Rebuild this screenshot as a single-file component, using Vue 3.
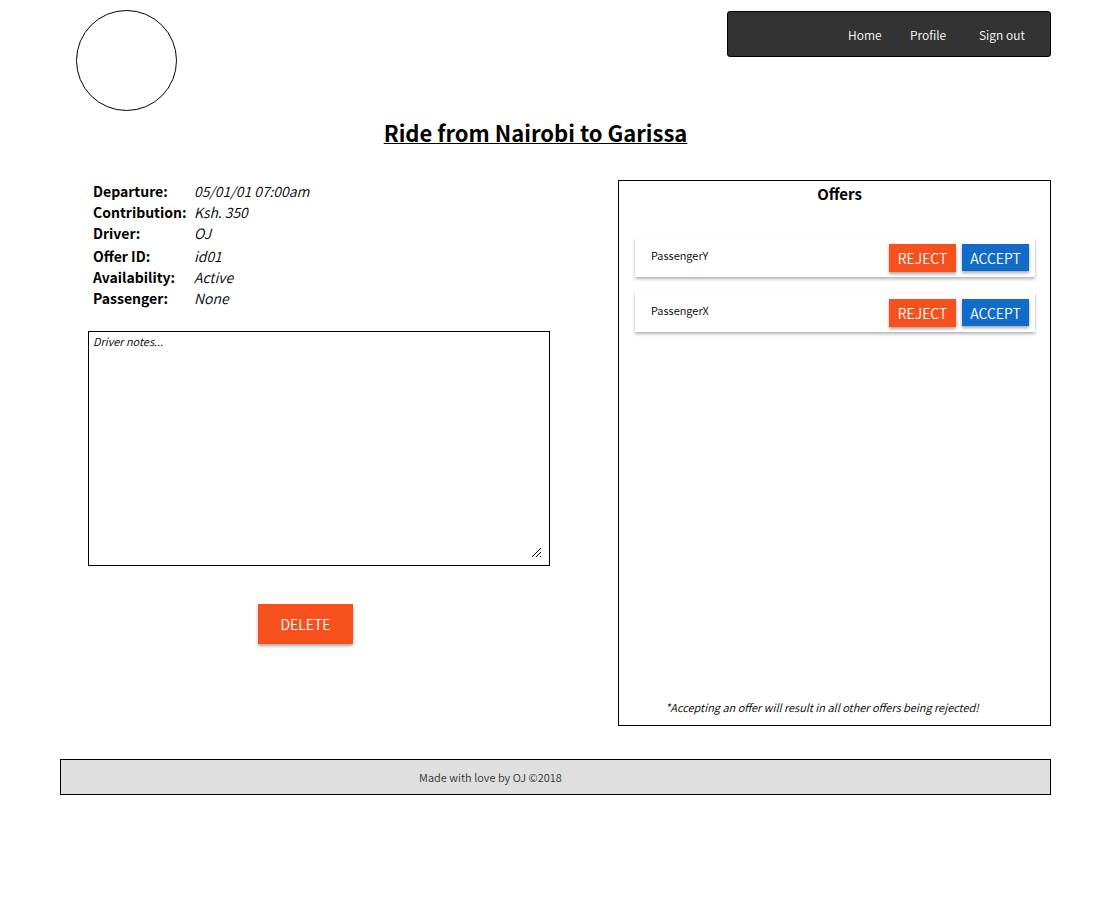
<script setup>
import { ref } from 'vue'

const details = [
  [
    { label: 'Departure:', value: '05/01/01 07:00am' },
    { label: 'Contribution:', value: 'Ksh. 350' },
    { label: 'Driver:', value: 'OJ' },
  ],
  [
    { label: 'Offer ID:', value: 'id01' },
    { label: 'Availability:', value: 'Active' },
    { label: 'Passenger:', value: 'None' },
  ],
]
const offers = ['PassengerY', 'PassengerX']
const notes = ref('')

// Pixels of the resize grip: one long diagonal, one short one and a corner dot.
const diagonal = (x, n) => Array.from({ length: n }, (_, i) => [x + i, 8 - i])
const gripPixels = [...diagonal(0, 9), ...diagonal(4, 5), ...diagonal(8, 1)]
</script>

<template>
  <div class="page">
    <header class="top">
      <div class="logo"></div>
      <nav class="nav">
        <a href="#home">Home</a>
        <a href="#profile">Profile</a>
        <a href="#signout">Sign out</a>
      </nav>
    </header>

    <h1 class="title"><span>Ride from Nairobi to Garissa</span></h1>

    <main class="main">
      <section class="ride">
        <div class="details">
          <dl v-for="(group, i) in details" :key="i" class="group">
            <template v-for="d in group" :key="d.label">
              <dt>{{ d.label }}</dt>
              <dd>{{ d.value }}</dd>
            </template>
          </dl>
        </div>
        <div class="notes">
          <textarea v-model="notes" aria-label="Driver notes" placeholder="Driver notes..."></textarea>
          <svg class="grip" width="9" height="9" viewBox="0 0 9 9" shape-rendering="crispEdges" aria-hidden="true">
            <rect v-for="([x, y], i) in gripPixels" :key="i" :x="x" :y="y" width="1" height="1" />
          </svg>
        </div>
        <button class="btn reject delete" type="button">DELETE</button>
      </section>

      <section class="offers">
        <h2>Offers</h2>
        <ul>
          <li v-for="name in offers" :key="name" class="offer">
            <span class="name">{{ name }}</span>
            <button class="btn reject" type="button">REJECT</button>
            <button class="btn accept" type="button">ACCEPT</button>
          </li>
        </ul>
        <p class="hint">*Accepting an offer will result in all other offers being rejected!</p>
      </section>
    </main>

    <footer class="footer">Made with love by OJ ©2018</footer>
  </div>
</template>

<style>
body {
  margin: 0;
  background: #fff;
}
</style>

<style scoped>
.page {
  box-sizing: border-box;
  padding: 10px 50px 0 60px;
  font-family: "Noto Sans CJK SC", "Noto Sans", sans-serif;
  color: #000;
}
.page * {
  box-sizing: border-box;
}
.top {
  display: flex;
  justify-content: space-between;
  align-items: flex-start;
  padding-left: 16px;
}
.logo {
  width: 101px;
  height: 101px;
  border: 1px solid #000;
  border-radius: 50%;
}
.nav {
  display: grid;
  grid-template-columns: 62px 69px 46px;
  justify-content: end;
  align-items: center;
  width: 324px;
  height: 46px;
  margin-top: 1px;
  padding: 2px 25px 0 0;
  background: #333;
  border: 1px solid #000;
  border-radius: 3px;
  font-size: 12px;
  line-height: 20px;
}
.nav a {
  color: #fff;
  font-weight: 350;
  text-decoration: none;
  white-space: nowrap;
}
.title {
  margin: 5px 0 0;
  padding-right: 40px;
  text-align: center;
  font-size: 22px;
  line-height: 32px;
}
.title span {
  text-decoration: underline;
  text-decoration-thickness: 1px;
  text-underline-offset: 1px;
}
.main {
  display: grid;
  grid-template-columns: 462fr 433fr;
  gap: 68px;
  margin-top: 32px;
  padding-left: 28px;
}
.ride {
  display: flex;
  flex-direction: column;
}
.details {
  display: flex;
  flex-direction: column;
  gap: 2px;
  padding: 1px 0 0 5px;
}
.group {
  display: grid;
  grid-template-columns: 101px 1fr;
  margin: 0;
  font-size: 14px;
  line-height: 21px;
}
.group dt {
  font-weight: 700;
  white-space: nowrap;
}
.group dd {
  margin: 0;
  font-style: italic;
  font-weight: 350;
}
.notes {
  position: relative;
  height: 235px;
  margin-top: 22px;
}
.notes textarea {
  display: block;
  width: 100%;
  height: 100%;
  margin: 0;
  padding: 1px 4px;
  border: 1px solid #000;
  border-radius: 0;
  outline: none;
  resize: none;
  background: #fff;
  color: #000;
  font-family: inherit;
  font-size: 11px;
  font-style: italic;
  font-weight: 350;
  line-height: 16px;
}
.notes textarea::placeholder {
  color: #000;
  opacity: 1;
}
.grip {
  position: absolute;
  right: 9px;
  bottom: 9px;
}
.btn {
  padding: 0;
  border: 0;
  color: #fff;
  font-family: inherit;
  font-size: 14px;
  font-weight: 350;
  line-height: 20px;
  box-shadow: 0 2px 3px rgba(0, 0, 0, 0.35);
}
.reject {
  background: #f6511d;
}
.accept {
  background: #116bc9;
}
.delete {
  width: 95px;
  height: 40px;
  margin: 38px 0 0 170px;
}
.offers {
  display: flex;
  flex-direction: column;
  min-height: 546px;
  padding: 0 15px 8px 16px;
  border: 1px solid #000;
}
.offers h2 {
  margin: 3px 0 0;
  padding-left: 9px;
  text-align: center;
  font-size: 15px;
  line-height: 20px;
}
.offers ul {
  display: flex;
  flex-direction: column;
  gap: 15px;
  margin: 33px 0 0;
  padding: 0;
  list-style: none;
}
.offer {
  display: flex;
  align-items: flex-start;
  gap: 6px;
  height: 40px;
  padding: 7px 6px 0 16px;
  background: #fff;
  box-shadow: 0 2px 3px rgba(0, 0, 0, 0.3);
}
.offer .name {
  flex: 1;
  padding-top: 3px;
  color: #000;
  font-size: 11px;
  font-weight: 350;
  line-height: 16px;
}
.offer .btn {
  width: 67px;
  height: 28px;
}
.offer .accept {
  height: 27px;
}
.hint {
  margin: auto 0 0;
  padding-right: 26px;
  text-align: center;
  color: #000;
  font-size: 11px;
  font-style: italic;
  font-weight: 350;
  line-height: 20px;
}
.footer {
  height: 36px;
  margin-top: 33px;
  padding-right: 130px;
  border: 1px solid #000;
  background: #dfdfdf;
  color: #333;
  text-align: center;
  font-size: 11px;
  font-weight: 350;
  line-height: 34px;
}
</style>
